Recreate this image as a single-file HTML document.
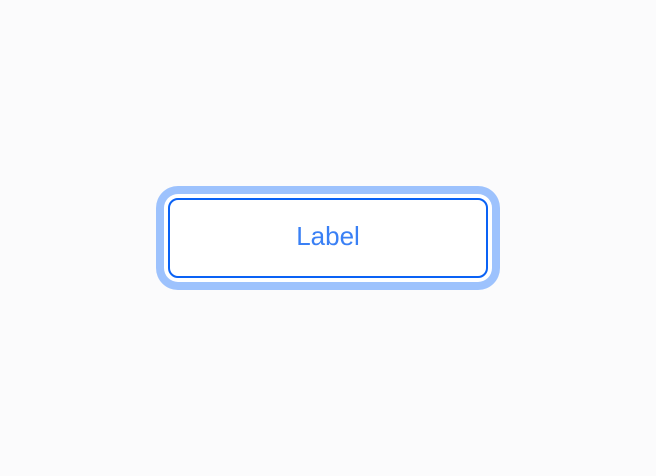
<html><head><style>
body{margin:0;width:656px;height:476px;background:#fbfbfc;position:relative;font-family:"Liberation Sans",sans-serif}
.b{position:absolute;left:168px;top:198px;width:320px;height:80px;box-sizing:border-box;border:2px solid #0a62f5;border-radius:10px;background:#fff;box-shadow:0 0 0 4px #fff,0 0 0 12px #9dc2fd;display:flex;align-items:center;justify-content:center;color:#3a80f5;font-size:26px;padding-bottom:4px}
</style></head><body><div class="b">Label</div></body></html>
